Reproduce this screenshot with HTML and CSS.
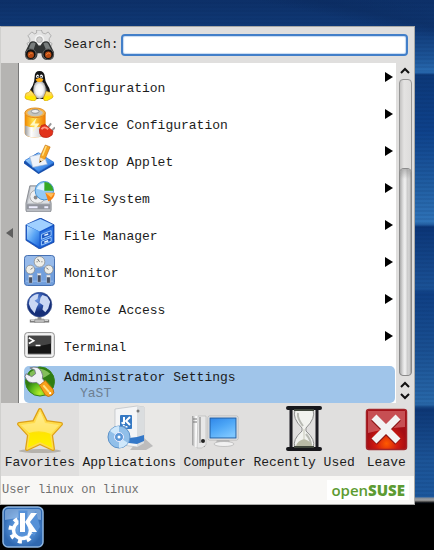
FILE: index.html
```
<!DOCTYPE html>
<html lang="en">
<head>
<meta charset="utf-8">
<title>Application launcher</title>
<link rel="stylesheet" href="styles.css">
</head>
<body>
<svg class="defs" width="0" height="0" aria-hidden="true">
<defs>
<linearGradient id="gold" x2="0" y2="1"><stop stop-color="#ffe98a"/><stop offset=".5" stop-color="#ffd83a"/><stop offset=".6" stop-color="#ffe600"/><stop offset="1" stop-color="#fff200"/></linearGradient>
<linearGradient id="blue" x2="1" y2="1"><stop stop-color="#bfe3ff"/><stop offset=".5" stop-color="#5aa5f5"/><stop offset="1" stop-color="#1a62d8"/></linearGradient>
<linearGradient id="screen" x2=".6" y2="1"><stop stop-color="#2f86e8"/><stop offset=".5" stop-color="#4da6f6"/><stop offset="1" stop-color="#7cc6ff"/></linearGradient>
<linearGradient id="metal" x2="1"><stop stop-color="#999"/><stop offset=".3" stop-color="#fff"/><stop offset=".7" stop-color="#ddd"/><stop offset="1" stop-color="#888"/></linearGradient>
<linearGradient id="orange" x2="1"><stop stop-color="#f28a00"/><stop offset=".4" stop-color="#ffe04a"/><stop offset="1" stop-color="#f07800"/></linearGradient>
<radialGradient id="red" cy=".85"><stop stop-color="#ff5a00"/><stop offset=".55" stop-color="#d01a10"/><stop offset="1" stop-color="#a50d14"/></radialGradient>
<radialGradient id="globe" cx=".4" cy=".3"><stop stop-color="#6f98e0"/><stop offset=".6" stop-color="#2b50a8"/><stop offset="1" stop-color="#162f78"/></radialGradient>
<radialGradient id="green" cy=".9"><stop stop-color="#b8f02a"/><stop offset=".6" stop-color="#5cb81c"/><stop offset="1" stop-color="#2f7d12"/></radialGradient>
<radialGradient id="kde"><stop stop-color="#86b8ee"/><stop offset=".6" stop-color="#4f8bd2"/><stop offset="1" stop-color="#2f68b0"/></radialGradient>
<radialGradient id="belly"><stop stop-color="#fff"/><stop offset=".6" stop-color="#f2f2f2"/><stop offset="1" stop-color="#aaa"/></radialGradient>
</defs>
</svg>
<main class="launcher">
  <form class="search">
    <svg class="icon" viewBox="0 0 32 32" aria-hidden="true"><path d="m13 0 5 0 1 3 3 1 3-2 3 4-2 3 0 3 3 2-2 5H6l-3-5 3-2V9L4 6l4-4 3 2 2-1z" fill="#e2e2e2" stroke="#a0a0a0" stroke-width=".8" stroke-linejoin="round"/><circle cx="16" cy="10" r="5" fill="#f4f4f4"/><circle cx="16" cy="10" r="3" fill="#ccc" stroke="#999" stroke-width=".6"/><path d="M1 23 6 13q3-3 7 0l2 3h2l2-3q4-3 7 0l5 10q1 7-5 8h-3q-5-1-5-7h-4q0 6-5 7H6q-6-1-5-8z" fill="#303333"/><path d="M7 14q3-2 5 0l-2 6-5-1zm13 0q3-2 5 0l3 6-5 1z" fill="#777c7c"/><circle cx="7" cy="25" r="5.500" fill="#111" stroke="#666"/><circle cx="25" cy="25" r="5.500" fill="#111" stroke="#666"/><circle cx="7" cy="25.500" r="3.300" fill="#b84a12"/><circle cx="25" cy="25.500" r="3.300" fill="#b84a12"/><path d="M5 26q2-4 4-1m14 1q2-4 4-1" stroke="#f08a40" fill="none"/></svg>
    <label for="q">Search:</label>
    <input id="q" type="text" autocomplete="off">
  </form>
  <div class="body">
    <button class="back" type="button" aria-label="Back"><svg viewBox="0 0 7 10" aria-hidden="true"><path d="M7 0v10L0 5z" fill="#5e5e5e"/></svg></button>
    <ul class="list">
      <li><a class="row" href="#"><svg class="icon" viewBox="0 0 32 32" aria-hidden="true"><path d="M11 7q0-6 5-6t5.500 6q0 5 3 9t2.500 11L22 30H10l-5-5q1-5 4-9 2-4 2-9z" fill="#151515"/><path d="M17 4q3 3 2 7l5 9v7l-5 2z" fill="#555"/><ellipse cx="16" cy="20.500" rx="6.500" ry="9.500" fill="url(#belly)"/><ellipse cx="14" cy="6.500" rx="1.500" ry="1.900" fill="#fff"/><ellipse cx="18" cy="6.500" rx="1.500" ry="1.900" fill="#fff"/><circle cx="14.300" cy="7" r=".8"/><circle cx="17.700" cy="7" r=".8"/><path d="m12 9.500 4-1.500 4 1.500q-1 3-4 3t-4-3z" fill="#ffae12"/><path d="m7 21 5 6q2 4-2 5l-8-2q-2-1 0-6 3 0 5-3zM23 22q2 1 5 1l2 4q0 2-3 3l-4 2q-3 0-3-3z" fill="url(#gold)" stroke="#d49b12" stroke-width=".7"/></svg><span class="label">Configuration</span><svg class="arrow" viewBox="0 0 8 10" aria-hidden="true"><path d="M0 0v10l8-5z"/></svg></a></li>
      <li><a class="row" href="#"><svg class="icon" viewBox="0 0 32 32" aria-hidden="true"><path d="M1 6v21q1 4 10 4t11-4V6z" fill="url(#orange)" stroke="#df8914" stroke-width=".6"/><path d="M1 19q10 4 21 0v8q-1 4-11 4T1 27z" fill="url(#metal)"/><ellipse cx="11.500" cy="6" rx="10.500" ry="5" fill="#f5b44a" stroke="#e08c20"/><ellipse cx="11.500" cy="6" rx="8" ry="3.500" fill="#c4c4bc"/><ellipse cx="11.500" cy="4.500" rx="4" ry="2" fill="#eee" stroke="#777" stroke-width=".7"/><path d="m13 11-7 8h5l-2 7 7-9h-5z" fill="#fff8c4"/><path d="m24 22 4-5m0 8 4-4" stroke="#999" stroke-width="2"/><path d="m18 19 4-1 8 7-1 4q-4 4-10 2-4-3-3-8z" fill="#e2331c" stroke="#ad170d" stroke-width=".6"/><path d="M18 23q3-4 7 0" stroke="#ff9a85" stroke-width="2" fill="none"/></svg><span class="label">Service Configuration</span><svg class="arrow" viewBox="0 0 8 10" aria-hidden="true"><path d="M0 0v10l8-5z"/></svg></a></li>
      <li><a class="row" href="#"><svg class="icon" viewBox="0 0 32 32" aria-hidden="true"><path d="m0 18 14-9 17 10v3L15 31 0 20z" fill="#174fac"/><path d="m1 17 14-8 16 10-16 10z" fill="url(#blue)" stroke="#2d73d2" stroke-width=".7"/><path d="m6 13 14-3 4 11-15 3z" fill="#eef3fa" stroke="#a4b5ce" stroke-width=".6"/><path d="m16 19 1-7L22 1l5 2-5 12z" fill="#f5a522" stroke="#bd6a0c" stroke-width=".6"/><path d="m19 12 4-10" stroke="#ffe082" stroke-width="1.500"/><path d="m16 19 .8-5 4 2z" fill="#f5dfb4"/><path d="m16 19 1-2 1 1z"/></svg><span class="label">Desktop Applet</span><svg class="arrow" viewBox="0 0 8 10" aria-hidden="true"><path d="M0 0v10l8-5z"/></svg></a></li>
      <li><a class="row" href="#"><svg class="icon" viewBox="0 0 32 32" aria-hidden="true"><path d="M6 5h18l4 18v7q0 2-2 2H4q-2 0-2-2v-7z" fill="#b9bcc2" stroke="#75787f" stroke-width=".8"/><path d="M7 6h16l3 17H4z" fill="#dcdfe3"/><path d="M3 24h24v5H3z" fill="#92959e"/><path d="M5 27h9m7 0h4" stroke="#eef" stroke-width="2"/><ellipse cx="14" cy="16" rx="8" ry="7" fill="#eff0f2" stroke="#aaa"/><circle cx="12" cy="17" r="2" fill="#888"/><circle cx="21" cy="10" r="9.500" fill="#93c9f5" stroke="#458fd2"/><path d="M13 8q3-6 9-6l-1 8z" fill="#dff3ff"/><path d="M21 10V1q8 0 9.500 9z" fill="#36a925"/><path d="M22 12h10q-1 7-7 9z" fill="#f78212"/><path d="m22 12 9 1-3 4z" fill="#ffc05c"/></svg><span class="label">File System</span><svg class="arrow" viewBox="0 0 8 10" aria-hidden="true"><path d="M0 0v10l8-5z"/></svg></a></li>
      <li><a class="row" href="#"><svg class="icon" viewBox="0 0 32 32" aria-hidden="true"><path d="m17 0 14 7v18l-15 7-14-9V7z" fill="#1759cc" stroke="#0c3c9b" stroke-width=".7"/><path d="m2 7 15-6 13 6-14 7z" fill="#a0d0ff"/><path d="m3 8 13 6v16L3 22z" fill="url(#blue)"/><path d="m17 15 13-6v15l-13 6z" fill="#2c72df"/><path d="m18 17 10-4v5l-10 4zm0 7 10-4v4l-10 4z" fill="#1d59c3" stroke="#a8d3ff" stroke-width=".9"/><path d="m21 18 4-1.500m-4 8.500 4-1.500" stroke="#e6f4ff" stroke-width="1.500"/></svg><span class="label">File Manager</span><svg class="arrow" viewBox="0 0 8 10" aria-hidden="true"><path d="M0 0v10l8-5z"/></svg></a></li>
      <li><a class="row" href="#"><svg class="icon" viewBox="0 0 32 32" aria-hidden="true"><rect x=".5" y=".5" width="31" height="31" rx="3" fill="#729fdc" stroke="#416cae"/><path d="M1 15V3l2-2h26l2 2v8z" fill="#98bbea"/><g fill="#eeeee9" stroke="#8c8d8d" stroke-width=".8"><circle cx="16" cy="7" r="5.500"/><circle cx="6.500" cy="15" r="4.500"/><circle cx="25.500" cy="15" r="4.500"/></g><path d="m16 7-2-3m-7 11 2-2m16 2-2-2M13 7h1m4 0h1" stroke="#666" stroke-width="1"/><path d="M2 27h28" stroke="#9bbff0"/><g fill="#4a5264" stroke="#bdcce4" stroke-width=".5"><rect x="5" y="21" width="3.500" height="8"/><rect x="14" y="19" width="3.500" height="9"/><rect x="23.500" y="21" width="3.500" height="8"/></g><path d="M5 22h3.500M14 20h3.500m6 2h3.500" stroke="#eee" stroke-width="2"/></svg><span class="label">Monitor</span><svg class="arrow" viewBox="0 0 8 10" aria-hidden="true"><path d="M0 0v10l8-5z"/></svg></a></li>
      <li><a class="row" href="#"><svg class="icon" viewBox="0 0 32 32" aria-hidden="true"><path d="M14 25h4v4h-4z" fill="#999"/><path d="M6 30h20" stroke="#777" stroke-width="3"/><path d="M7 29.500h18" stroke="#ddd"/><rect x="11" y="28" width="10" height="4" rx="1" fill="#bbb" stroke="#777" stroke-width=".6"/><circle cx="16" cy="13" r="12.700" fill="url(#globe)" stroke="#354d8b" stroke-width=".7"/><path d="M6 7q4-5 9-5l-1 5-3 2 4 3-2 4-2 6-4-5-2-5zM19 3l5 2 3 5-2 7-3 4-3-3 1-4-4-3 1-5z" fill="#cad8f4"/></svg><span class="label">Remote Access</span><svg class="arrow" viewBox="0 0 8 10" aria-hidden="true"><path d="M0 0v10l8-5z"/></svg></a></li>
      <li><a class="row" href="#"><svg class="icon" viewBox="0 0 32 32" aria-hidden="true"><rect x=".7" y="3.700" width="30.600" height="25.600" rx="3" fill="#f2f2f2" stroke="#8b8b8b"/><rect x="4" y="7" width="24" height="19" fill="#161616"/><path d="M4 7h24v8q-10 3-24 3z" fill="#444"/><path d="M4 26h24" stroke="#aaa"/><path d="m5 9 5 3-5 3m7 2h5" fill="none" stroke="#fff" stroke-width="1.700"/></svg><span class="label">Terminal</span><svg class="arrow" viewBox="0 0 8 10" aria-hidden="true"><path d="M0 0v10l8-5z"/></svg></a></li>
      <li><a class="row selected" href="#"><svg class="icon" viewBox="0 0 32 32" aria-hidden="true"><circle cx="16.500" cy="16" r="15" fill="url(#green)" stroke="#348019"/><path d="M6 7Q16-2 27 8q-9 7-22 7z" fill="#a6dc78" opacity=".7"/><path d="M6 2q9-3 12 4 2 4 1 7l4 5-4 4-6-5Q4 19 1 11l1-3 6 3 4-3-1-4z" fill="#eff0f5" stroke="#6e7480" stroke-width=".9"/><path d="m16 20 6-5 8 9q2 4-1 6-4 3-7 0z" fill="#f9a21b" stroke="#bd6806" stroke-width=".9"/><path d="m20 20 6 7" stroke="#ffe180" stroke-width="2"/><circle cx="27" cy="28" r="1.200" fill="#fff"/></svg><span class="label">Administrator Settings<small>YaST</small></span></a></li>
    </ul>
    <div class="scroll">
      <button type="button" aria-label="Scroll up"><svg viewBox="0 0 10 7" aria-hidden="true"><path d="m1 6 4-4 4 4"/></svg></button>
      <div class="track"><div class="thumb"></div></div>
      <button type="button" aria-label="Scroll up one line"><svg viewBox="0 0 10 7" aria-hidden="true"><path d="m1 6 4-4 4 4"/></svg></button>
      <button type="button" aria-label="Scroll down"><svg viewBox="0 0 10 7" aria-hidden="true"><path d="m1 1 4 4 4-4"/></svg></button>
    </div>
  </div>
  <nav class="tabs">
    <button type="button"><svg viewBox="0 0 48 48" aria-hidden="true"><ellipse cx="24" cy="46" rx="21" ry="2" fill="#b5b2ac"/><path d="m24 5 6 12 15 2-10 11 2 14-13-6-13 6 2-14L3 19l15-2z" fill="url(#gold)" stroke="#dda017" stroke-width="4" stroke-linejoin="round"/><path d="m24 5 6 12 15 2-10 11 2 14-13-6-13 6 2-14L3 19l15-2z" fill="url(#gold)" stroke="#ffdc4a" stroke-width="1.500" stroke-linejoin="round"/><path d="m24 6 5 12 14 2-8 9q-11-5-22-1l-8-8 14-2z" fill="#fff3a0" opacity=".5"/></svg>Favorites</button>
    <button type="button" class="current"><svg viewBox="0 0 48 48" aria-hidden="true"><path d="m30 39 8-7 10 9-7 4H25z" fill="#aaa" opacity=".7"/><path d="m10 4 22-3 7 1v36l-7 4-22-3z" fill="#f4f5f6" stroke="#b9bdc2" stroke-width=".7"/><path d="m32 1 7 1v36l-7 4z" fill="#dadddf"/><path d="m32 32 7-2v6l-7 3-8-1v-5z" fill="#3478c8"/><rect x="15" y="10" width="12" height="14" rx="1" fill="#3679c3"/><path d="M19 12v7m6-7-4 4 4 4" stroke="#fff" stroke-width="2" fill="none"/><path d="M17 17q1 5 6 5" stroke="#fff" stroke-width="1.500" stroke-dasharray="2 1" fill="none"/><circle cx="33" cy="6" r="1.500" fill="#777"/><circle cx="14" cy="32" r="11" fill="#91bfe9" stroke="#5b91c8"/><path d="m14 32-9-6q4-5 9-5zm0 0 9 6q-4 5-9 5z" fill="#dff2ff" opacity=".8"/><circle cx="14" cy="32" r="4.500" fill="#5b97d7" stroke="#eef"/><circle cx="14" cy="32" r="1.500" fill="#fff"/></svg>Applications</button>
    <button type="button"><svg viewBox="0 0 48 48" aria-hidden="true"><path d="M1 11h13v31H4l-3-2z" fill="url(#metal)"/><path d="M7 11h8v29l-4 3H6z" fill="#e8e8e8" stroke="#aaa" stroke-width=".5"/><path d="M9 12v26M2 14h4m-4 3h4" stroke="#777"/><circle cx="12" cy="36" r="2" fill="#222"/><path d="M26 34h12l1 4H25z" fill="#bbb"/><ellipse cx="33" cy="39" rx="10" ry="2.500" fill="#f1f1f1" stroke="#aaa" stroke-width=".6"/><rect x="17" y="11" width="30" height="24" rx="1.500" fill="#eee" stroke="#aaa" stroke-width=".7"/><rect x="19" y="13" width="26" height="20" fill="url(#screen)" stroke="#225c9e"/></svg>Computer</button>
    <button type="button"><svg viewBox="0 0 48 48" aria-hidden="true"><path d="M15 5h18q3 8-7 18v3q10 9 7 16H15q-3-7 7-16v-3Q12 13 15 5z" fill="#f1f2ee" stroke="#8f8f8f"/><path d="M18 8q-1 5 5 13M31 40q0-5-5-11" stroke="#b8bab3" stroke-width="2" fill="none"/><path d="M16 41q1-5 8-7 7 2 8 7z" fill="#b9bba6"/><path d="M24 24v11" stroke="#c8cabb"/><path d="M11 4v39M37 4v39" stroke="#1c1c22" stroke-width="3"/><path d="M12.500 5v38" stroke="#777"/><path d="M8 3h32M8 44h32" stroke="#17171b" stroke-width="4" stroke-linecap="round"/><path d="M14 5h20m-20 37h20" stroke="#40463c" stroke-width="2"/></svg>Recently Used</button>
    <button type="button"><svg viewBox="0 0 48 48" aria-hidden="true"><rect x="4.500" y="4.500" width="40" height="40" rx="2.500" fill="url(#red)" stroke="#a3252a" stroke-width="1.500"/><path d="M6 6h37v16Q25 23 6 28z" fill="#f2a0a0" opacity=".45"/><path d="m12 13 24 24m0-24L12 37" stroke="#8b1514" stroke-width="8"/><path d="m12 12 24 24m0-24L12 36" stroke="#f3f3f3" stroke-width="7"/></svg>Leave</button>
  </nav>
  <footer class="status"><span>User linux on linux</span><span class="brand">open<b>SUSE</b></span></footer>
</main>
<div class="panel"><button type="button" aria-label="Application launcher menu"><svg viewBox="0 0 42 42" aria-hidden="true"><rect x="1" y="1" width="40" height="40" rx="5" fill="url(#kde)" stroke="#8eb6e2" stroke-width="1.500"/><path d="M3 14V6q0-3 3-3h30q3 0 3 3v8q-18-4-36 0z" fill="#b9d6f5" opacity=".5"/><circle cx="20" cy="24" r="11.500" fill="none" stroke="#fff" stroke-width="4" stroke-dasharray="4 5.030"/><circle cx="20" cy="24" r="8.500" fill="none" stroke="#fff" stroke-width="3.500"/><path d="M18 6h6v22h-6z" fill="#5691d7" stroke="#5691d7" stroke-width="3"/><path d="M24 17 34 5l4 16-6 9z" fill="#5691d7"/><path d="M18 7h5v19h-5zM29 7h6l-7 9 7 10h-6l-6-10z" fill="#fff"/></svg></button></div>
</body>
</html>
```
FILE: styles.css
```
* { box-sizing: border-box; }
body {
  margin: 0;
  min-height: 100vh;
  padding-top: 26px;
  display: flex;
  flex-direction: column;
  font: 13px/16px "Liberation Mono", monospace;
  color: #1c1c1c;
  background:
    linear-gradient(12deg, transparent 94%, #0a285a66 96%, transparent 99%),
    repeating-linear-gradient(#0000 0 2px, #00205018 2px 4px),
    linear-gradient(#0d3068 0, #103a78 30px, #1d5598 58px, #2a6cb2 72px, #0c3878 75px, #0e418a 130px, #2260a4 190px, #2f73b8 223px, #0b3577 227px, #1b5296 288px, #0f3f84 293px, #1a5092 350px, #2969aa 404px, #0d3775 409px, #1c5497 460px, #1d589d 497px, #8e949b 498px, #aaa 500px, #000 503px);
}
.defs { position: absolute; }
svg { display: block; flex: none; }
button { font: inherit; color: inherit; border: 0; padding: 0; background: none; }
.launcher {
  margin-right: 19px;
  border: 1px solid #a9a9a7;
  border-left-color: #d0d0ce;
  background: #e0dfde;
}
.search { display: flex; align-items: center; height: 36px; padding: 0 6px 0 23px; }
.icon { width: 31px; height: 31px; }
.search label { margin: 0 2px 0 9px; }
.search input {
  flex: 1;
  min-width: 0;
  height: 22px;
  border: 2px solid #427fc9;
  border-radius: 4px;
  background: #fff;
  box-shadow: inset 0 0 1px 1px #c6daf2;
  font: inherit;
  outline: 0;
}
.body { display: flex; background: #fff; }
.back { width: 18px; display: grid; place-items: center; background: #b5b4b2; border-right: 1px solid #777; }
.back svg { width: 7px; height: 10px; }
.list { flex: 1; min-width: 0; margin: 0; padding: 7px 1px 0 5px; list-style: none; }
.row { display: flex; height: 37px; color: inherit; text-decoration: none; border-radius: 5px; }
.label { flex: 1; margin-left: 9px; padding-top: 11px; white-space: nowrap; }
.arrow { width: 8px; height: 10px; margin: 2px 2px 0 0; }
.selected { background: #a0c5ea; }
.selected .label { padding-top: 4px; }
.label small { display: block; padding-left: 16px; font-size: 13px; color: #6e7f91; }
.scroll { width: 18px; display: flex; flex-direction: column; align-items: center; gap: 5px; padding: 4px 0 3px; background: #e0dfde; }
.scroll svg { width: 10px; height: 7px; fill: none; stroke: #111; stroke-width: 2; }
.track { flex: 1; width: 13px; display: flex; align-items: flex-end; border: 1px solid #969696; border-radius: 4px; background: linear-gradient(90deg, #c4c3c2, #e4e3e2 4px, #dddcdb); }
.thumb { width: 100%; height: 70%; border-radius: 4px; box-shadow: 0 0 0 1px #8a8a8a; background: linear-gradient(#8888 0, transparent 10px), linear-gradient(90deg, #aaa, #ddd 3px, #f2f2f2 5px, #c4c4c4 8px, #ddd 9px, #999); }
.tabs { display: flex; height: 73px; }
.tabs button { flex: 1 1 auto; padding: 2px 2px 0; display: flex; flex-direction: column; align-items: center; gap: 2px; white-space: nowrap; }
.tabs svg { width: 48px; height: 48px; }
.tabs .current { background: #e9e8e6; }
.status { display: flex; align-items: center; justify-content: space-between; height: 28px; padding: 0 5px 0 1px; background: #f8f7f5; font-size: 12px; color: #707070; }
.brand { padding: 0 4px; background: #fff; color: #5c9b32; font: 600 15px/20px "Open Sans", sans-serif; }
.brand b { font-weight: 800; }
.panel { flex: 1; padding: 1px 2px; background: #000; }
.panel svg { width: 42px; height: 42px; }
```
